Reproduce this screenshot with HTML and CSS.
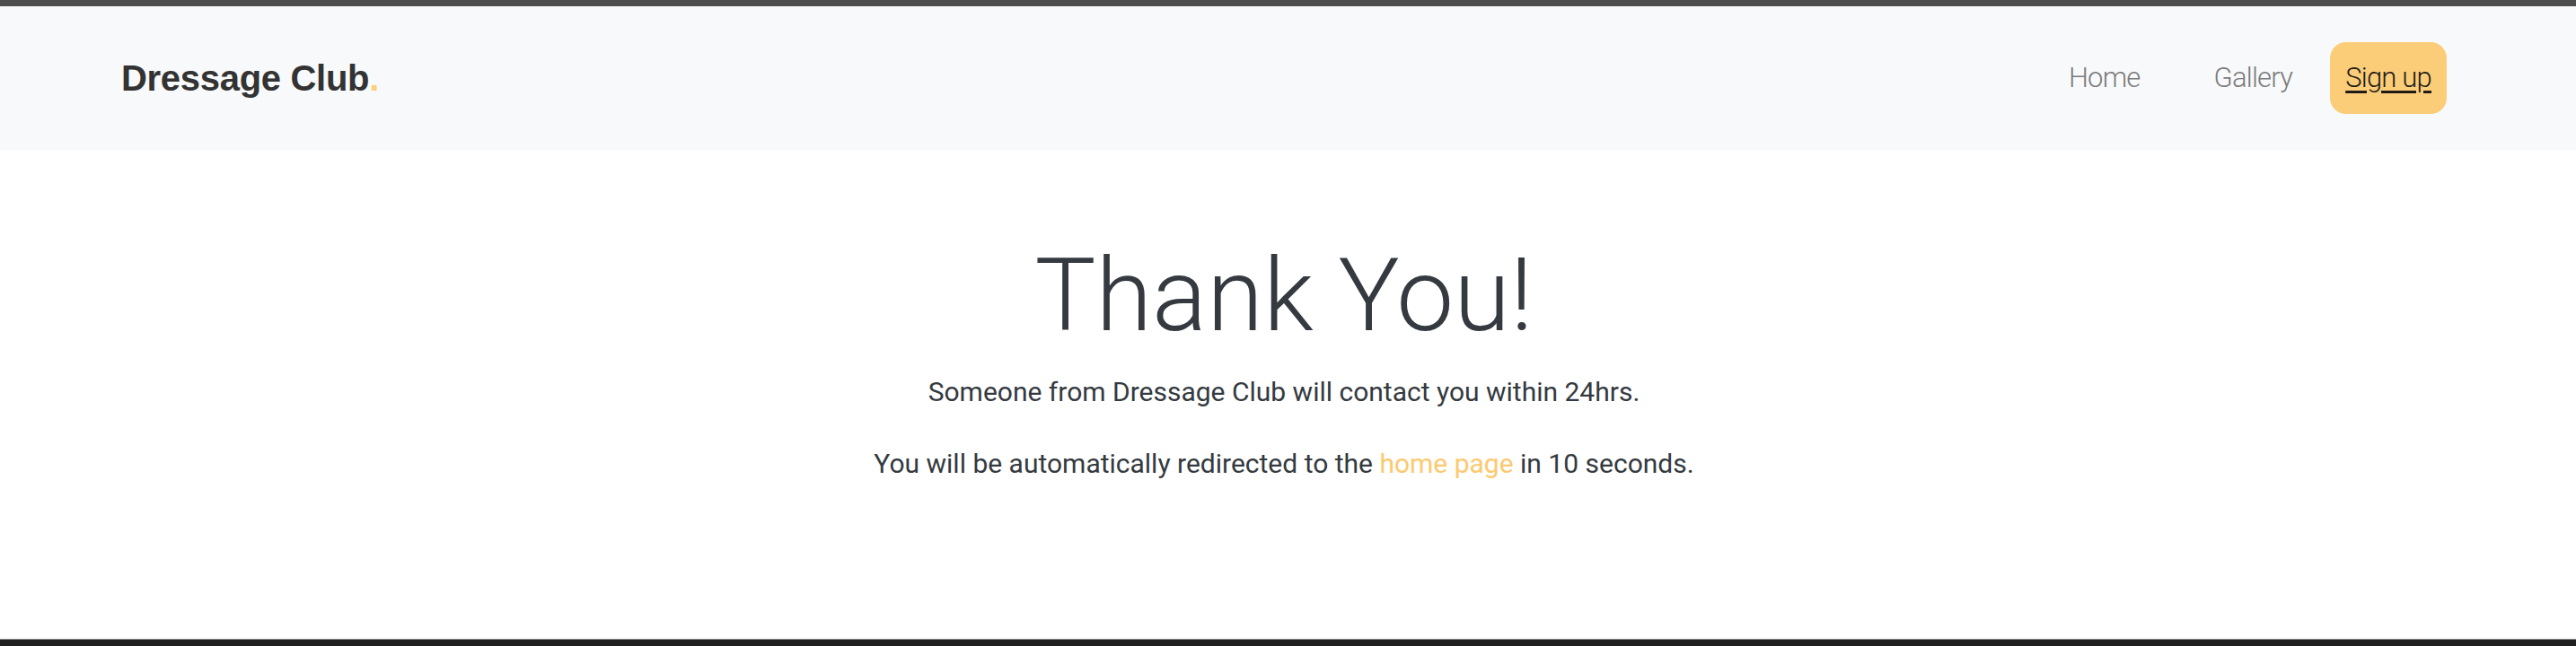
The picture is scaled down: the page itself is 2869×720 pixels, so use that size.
FILE: index.html
```html
<!DOCTYPE html>
<html lang="en">
<head>
<meta charset="utf-8">
<title>Thank You - Dressage Club</title>
<link rel="stylesheet" href="styles.css">
</head>
<body>
<div class="topbar"></div>
<header class="navbar">
  <a class="brand" href="#">Dressage Club<span class="dot">.</span></a>
  <nav class="nav">
    <a class="nav-link" href="#">Home</a>
    <a class="nav-link" href="#">Gallery</a>
    <a class="nav-link signup" href="#">Sign up</a>
  </nav>
</header>
<main class="content">
  <h1 class="title">Thank You!</h1>
  <p class="lead">Someone from Dressage Club will contact you within 24hrs.</p>
  <p class="lead">You will be automatically redirected to the <a class="link" href="#">home page</a> in 10 seconds.</p>
</main>
<footer class="footer"></footer>
</body>
</html>
```
FILE: styles.css
```css
html, body {
  margin: 0;
  padding: 0;
  height: 100%;
}
body {
  display: flex;
  flex-direction: column;
  background: #ffffff;
  font-family: Roboto, "Noto Sans", sans-serif;
  font-weight: 300;
  color: #343a40;
}
.topbar {
  height: 7px;
  background: #4d4d4d;
  flex: none;
}
.navbar {
  flex: none;
  height: 160px;
  background: #f8f9fa;
  display: flex;
  align-items: center;
  justify-content: space-between;
  padding: 0 144px 0 135px;
}
.brand {
  font-family: "Liberation Sans", Arial, sans-serif;
  font-weight: 700;
  font-size: 40px;
  color: #333333;
  text-decoration: none;
  letter-spacing: -0.3px;
}
.dot {
  color: #fcd07b;
}
.nav {
  display: flex;
  align-items: center;
}
.nav-link {
  font-size: 31px;
  letter-spacing: -0.8px;
  color: #7b7b7c;
  text-decoration: none;
  line-height: 80px;
  padding: 0 17px;
}
.nav-link + .nav-link {
  margin-left: 48px;
}
.nav-link.signup {
  margin-left: 25px;
  background: #fbcd78;
  color: #1f1c17;
  text-decoration: underline;
  text-underline-offset: 4px;
  border-radius: 18px;
}
.content {
  flex: 1;
  text-align: center;
  padding: 0 9px 0 0;
}
.title {
  margin: 94px 0 15px;
  font-family: Roboto, "Liberation Sans", sans-serif;
  font-weight: 300;
  font-size: 114px;
  line-height: 1.2;
  color: #343a40;
}
.lead {
  margin: 0 0 32px;
  font-size: 30px;
  font-weight: 400;
  letter-spacing: 0;
  line-height: 48px;
}
.link {
  color: #fcc96f;
  text-decoration: none;
}
.footer {
  flex: none;
  height: 7px;
  background: #202020;
  border-top: 1px solid #8a8a8a;
}
```
